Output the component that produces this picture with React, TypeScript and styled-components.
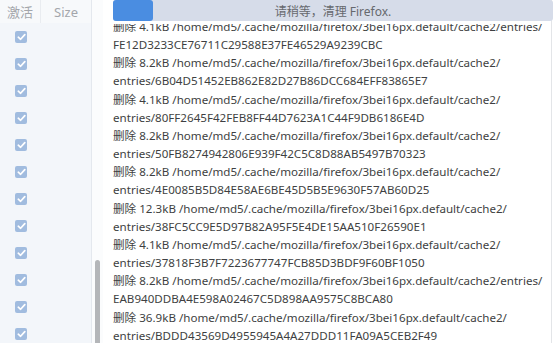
import React, { useLayoutEffect, useRef } from "react";
import styled, { createGlobalStyle } from "styled-components";

const Global = createGlobalStyle`
  html, body { margin: 0; padding: 0; background: #ffffff; }
  body { font-family: "Noto Sans", "Noto Sans CJK SC", sans-serif; }
`;

const Root = styled.div`
  display: flex;
  width: 554px;
  height: 343px;
  overflow: hidden;
  background: #ffffff;
`;

const Sidebar = styled.div`
  width: 91px;
  flex: none;
  display: flex;
  flex-direction: column;
  background: #f3f6fa;
  border-right: 1px solid #e4e8ee;
`;

const HeaderRow = styled.div`
  height: 23px;
  flex: none;
  display: flex;
  background: #f7f9fb;
`;

const HeadCell = styled.div<{ $w?: number }>`
  ${(p) => (p.$w ? `width: ${p.$w}px; flex: none;` : "flex: 1;")}
  display: flex;
  align-items: center;
  justify-content: center;
  font-size: 13px;
  color: #a3a6ab;
  border-right: ${(p) => (p.$w ? "1px solid #e9ecf0" : "none")};
`;

const CheckRow = styled.div`
  height: 27px;
  flex: none;
  display: flex;
  align-items: center;
  padding-left: 15px;
`;

const Box = styled.div`
  width: 12px;
  height: 12px;
  border-radius: 2px;
  background: #a1bcdf;
  display: flex;
  align-items: center;
  justify-content: center;
`;

const Gutter = styled.div`
  width: 11px;
  flex: none;
  display: flex;
  flex-direction: column;
  justify-content: flex-end;
  background: #fbfcfd;
`;

const Thumb = styled.div`
  width: 5px;
  height: 83px;
  margin-left: 3px;
  border-radius: 3px 3px 0 0;
  background: #b4b6b9;
`;

const Main = styled.div`
  width: 449px;
  flex: none;
  display: flex;
  flex-direction: column;
  border-right: 1px solid #e3e5e8;
  box-sizing: border-box;
`;

const Progress = styled.div`
  position: relative;
  flex: none;
  height: 21px;
  margin-left: 10px;
  margin-right: -2px;
  border-radius: 3px;
  background: #d6dce9;
  display: flex;
  z-index: 1;
`;

const Fill = styled.div`
  flex: none;
  height: 100%;
  border-radius: 3px;
  background: #4a8de1;
`;

const ProgressLabel = styled.span`
  position: absolute;
  inset: 0;
  display: flex;
  align-items: center;
  justify-content: center;
  font-size: 12px;
  color: #66696e;
`;

const Viewport = styled.div`
  flex: 1;
  margin-top: 3px;
  padding-left: 10px;
  overflow: hidden;
`;

const Log = styled.div`
  font-size: 11.6px;
  line-height: 18.15px;
  color: #3e3f42;
`;

const Line = styled.div`
  white-space: nowrap;
`;

const Check = () => (
  <svg width="9" height="8" viewBox="0 0 9 8">
    <polyline
      points="1.3,4.2 3.6,6.3 7.8,1.6"
      fill="none"
      stroke="#ffffff"
      strokeWidth="1.7"
      strokeLinecap="round"
      strokeLinejoin="round"
    />
  </svg>
);

const base = "/home/md5/.cache/mozilla/firefox/3bei16px.default/cache2/";

const lines = [
  `删除 4.1kB ${base}entries/`,
  "FE12D3233CE76711C29588E37FE46529A9239CBC",
  `删除 8.2kB ${base}`,
  "entries/6B04D51452EB862E82D27B86DCC684EFF83865E7",
  `删除 4.1kB ${base}`,
  "entries/80FF2645F42FEB8FF44D7623A1C44F9DB6186E4D",
  `删除 8.2kB ${base}`,
  "entries/50FB8274942806E939F42C5C8D88AB5497B70323",
  `删除 8.2kB ${base}`,
  "entries/4E0085B5D84E58AE6BE45D5B5E9630F57AB60D25",
  `删除 12.3kB ${base}`,
  "entries/38FC5CC9E5D97B82A95F5E4DE15AA510F26590E1",
  `删除 4.1kB ${base}`,
  "entries/37818F3B7F7223677747FCB85D3BDF9F60BF1050",
  `删除 8.2kB ${base}entries/`,
  "EAB940DDBA4E598A02467C5D898AA9575C8BCA80",
  `删除 36.9kB ${base}`,
  "entries/BDDD43569D4955945A4A27DDD11FA09A5CEB2F49",
  `删除 4.1kB ${base}`,
];

export default function App() {
  const viewRef = useRef<HTMLDivElement>(null);
  useLayoutEffect(() => {
    if (viewRef.current) viewRef.current.scrollTop = 6;
  }, []);
  return (
    <Root>
      <Global />
      <Sidebar>
        <HeaderRow>
          <HeadCell $w={40}>激活</HeadCell>
          <HeadCell>Size</HeadCell>
        </HeaderRow>
        {Array.from({ length: 12 }).map((_, i) => (
          <CheckRow key={i}>
            <Box>
              <Check />
            </Box>
          </CheckRow>
        ))}
      </Sidebar>
      <Gutter>
        <Thumb />
      </Gutter>
      <Main>
        <Progress>
          <Fill style={{ width: 40 }} />
          <ProgressLabel>请稍等，清理 Firefox.</ProgressLabel>
        </Progress>
        <Viewport ref={viewRef}>
          <Log>
            {lines.map((l, i) => (
              <Line key={i}>{l}</Line>
            ))}
          </Log>
        </Viewport>
      </Main>
    </Root>
  );
}
